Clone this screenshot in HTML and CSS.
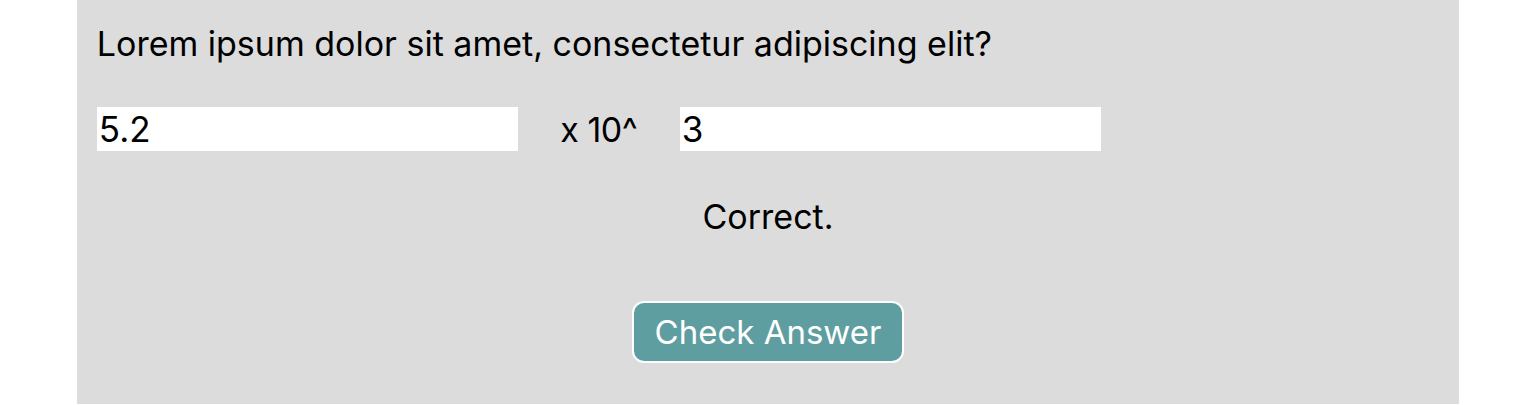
FILE: index.html
```html
<!DOCTYPE html>
<html lang="en">
<head>
    <meta charset="UTF-8">
    <meta name="viewport" content="width=device-width, initial-scale=1.0">
    <title>Scientific Notation Question</title>
    <link rel="stylesheet" href="styles.css">
</head>
<body>

<div class="container">
    <p class="question">Lorem ipsum dolor sit amet, consectetur adipiscing elit?</p>

    <div class="answer-row">
        <input type="text" id="coefficient" class="answer-input" value="5.2">
        <span class="times">x 10^</span>
        <input type="text" id="exponent" class="answer-input" value="3">
    </div>

    <div id="feedback" class="feedback">Correct.</div>

    <div class="actions">
        <button type="button" class="check-btn">Check Answer</button>
    </div>
</div>

</body>
</html>
```

FILE: styles.css
```css
body {
    font-family: Inter, "Noto Sans", sans-serif;
    background-color: #fff;
    margin: 0;
}

.container {
    width: 90%;
    height: 404px;
    margin: 0 auto;
    padding: 0 20px;
    box-sizing: border-box;
    background-color: #dcdcdc;
    color: #000;
}

.question {
    margin: 0;
    padding-top: 24px;
    font-size: 34px;
    line-height: 40px;
}

.answer-row {
    display: flex;
    align-items: center;
    margin-top: 43px;
}

.answer-input {
    width: 421px;
    height: 44px;
    padding: 0 2px;
    border: none;
    box-sizing: border-box;
    background-color: #fff;
    font-family: inherit;
    font-size: 35px;
    color: #000;
    outline: none;
}

.times {
    width: 162px;
    text-align: center;
    font-size: 34px;
    letter-spacing: -0.5px;
}

.feedback {
    margin-top: 46px;
    text-align: center;
    font-size: 34px;
    line-height: 40px;
}

.actions {
    display: flex;
    justify-content: center;
    margin-top: 64px;
}

.check-btn {
    width: 272px;
    height: 62px;
    padding: 0;
    background-color: #5f9ea0;
    color: #fff;
    border: 2px solid #fff;
    border-radius: 12px;
    font-family: inherit;
    font-size: 33px;
    cursor: pointer;
}
```
